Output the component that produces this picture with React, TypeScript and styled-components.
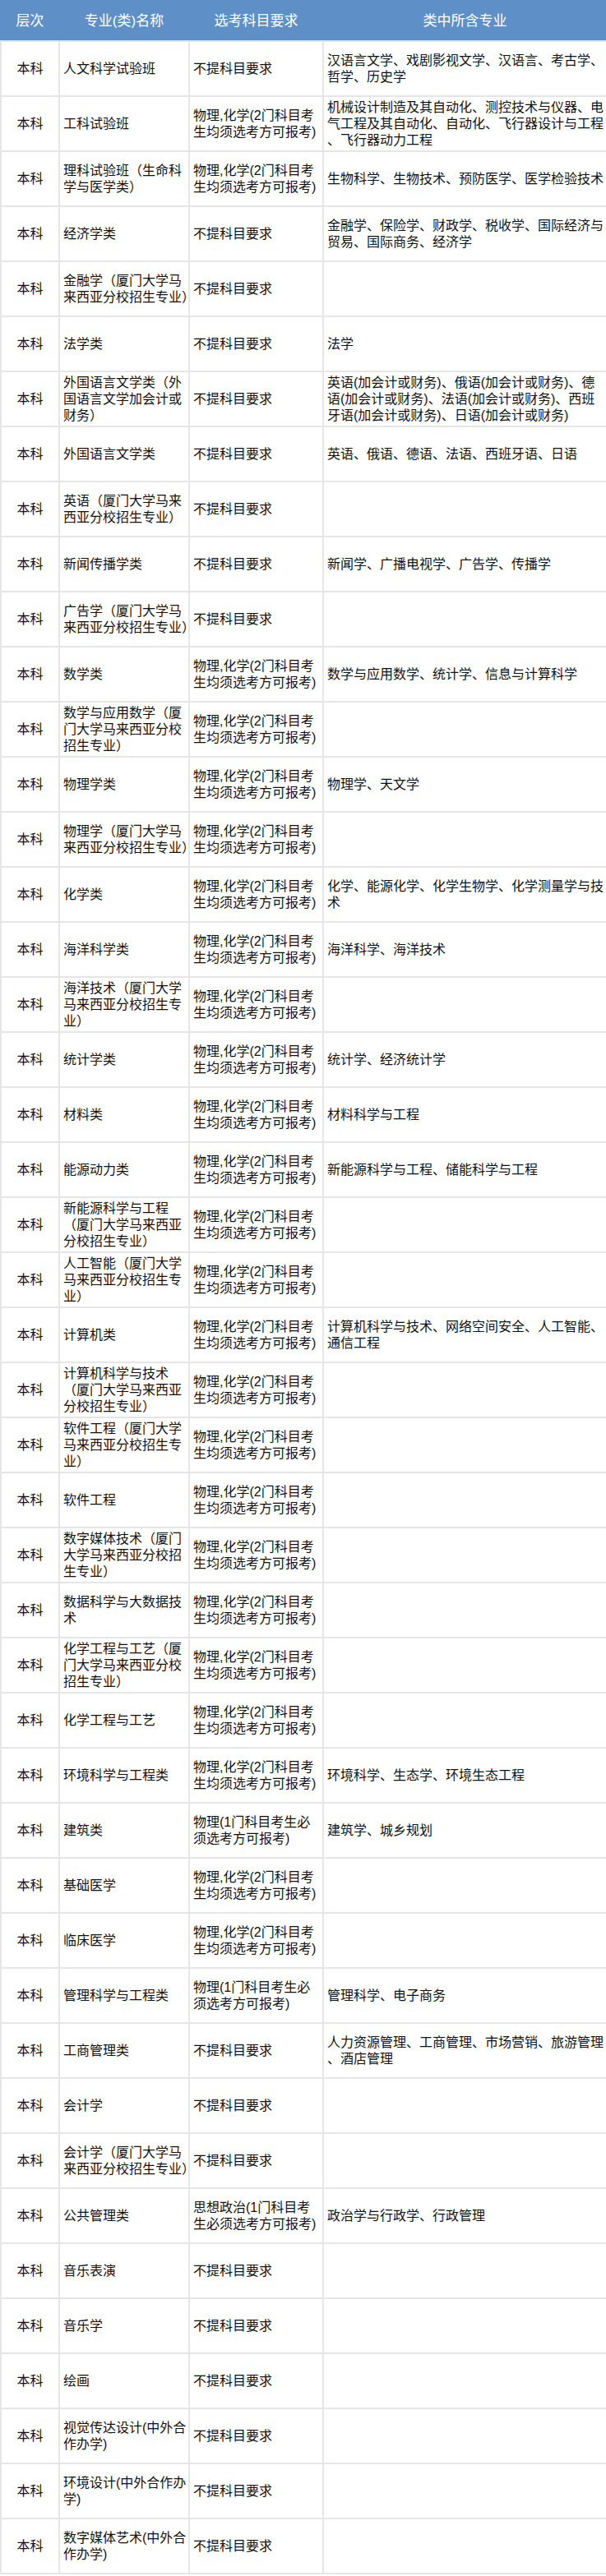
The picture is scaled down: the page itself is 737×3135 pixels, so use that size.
import styled, { createGlobalStyle } from 'styled-components';

const GlobalStyle = createGlobalStyle`
  html, body {
    margin: 0;
    padding: 0;
    background: #ffffff;
  }
  body {
    font-family: "Liberation Sans", "Noto Sans CJK SC", sans-serif;
  }
`;

const NONE = '不提科目要求';
const PHYS_CHEM = '物理,化学(2门科目考生均须选考方可报考)';
const PHYS = '物理(1门科目考生必须选考方可报考)';
const POLI = '思想政治(1门科目考生必须选考方可报考)';
const XMUM = '（厦门大学马来西亚分校招生专业）';

type Row = [string, string, string];

const rows: Row[] = [
  ['人文科学试验班', NONE, '汉语言文学、戏剧影视文学、汉语言、考古学、哲学、历史学'],
  ['工科试验班', PHYS_CHEM, '机械设计制造及其自动化、测控技术与仪器、电气工程及其自动化、自动化、飞行器设计与工程、飞行器动力工程'],
  ['理科试验班（生命科学与医学类）', PHYS_CHEM, '生物科学、生物技术、预防医学、医学检验技术'],
  ['经济学类', NONE, '金融学、保险学、财政学、税收学、国际经济与贸易、国际商务、经济学'],
  ['金融学' + XMUM, NONE, ''],
  ['法学类', NONE, '法学'],
  ['外国语言文学类（外国语言文学加会计或财务）', NONE, '英语(加会计或财务)、俄语(加会计或财务)、德语(加会计或财务)、法语(加会计或财务)、西班牙语(加会计或财务)、日语(加会计或财务)'],
  ['外国语言文学类', NONE, '英语、俄语、德语、法语、西班牙语、日语'],
  ['英语' + XMUM, NONE, ''],
  ['新闻传播学类', NONE, '新闻学、广播电视学、广告学、传播学'],
  ['广告学' + XMUM, NONE, ''],
  ['数学类', PHYS_CHEM, '数学与应用数学、统计学、信息与计算科学'],
  ['数学与应用数学' + XMUM, PHYS_CHEM, ''],
  ['物理学类', PHYS_CHEM, '物理学、天文学'],
  ['物理学' + XMUM, PHYS_CHEM, ''],
  ['化学类', PHYS_CHEM, '化学、能源化学、化学生物学、化学测量学与技术'],
  ['海洋科学类', PHYS_CHEM, '海洋科学、海洋技术'],
  ['海洋技术' + XMUM, PHYS_CHEM, ''],
  ['统计学类', PHYS_CHEM, '统计学、经济统计学'],
  ['材料类', PHYS_CHEM, '材料科学与工程'],
  ['能源动力类', PHYS_CHEM, '新能源科学与工程、储能科学与工程'],
  ['新能源科学与工程' + XMUM, PHYS_CHEM, ''],
  ['人工智能' + XMUM, PHYS_CHEM, ''],
  ['计算机类', PHYS_CHEM, '计算机科学与技术、网络空间安全、人工智能、通信工程'],
  ['计算机科学与技术' + XMUM, PHYS_CHEM, ''],
  ['软件工程' + XMUM, PHYS_CHEM, ''],
  ['软件工程', PHYS_CHEM, ''],
  ['数字媒体技术' + XMUM, PHYS_CHEM, ''],
  ['数据科学与大数据技术', PHYS_CHEM, ''],
  ['化学工程与工艺' + XMUM, PHYS_CHEM, ''],
  ['化学工程与工艺', PHYS_CHEM, ''],
  ['环境科学与工程类', PHYS_CHEM, '环境科学、生态学、环境生态工程'],
  ['建筑类', PHYS, '建筑学、城乡规划'],
  ['基础医学', PHYS_CHEM, ''],
  ['临床医学', PHYS_CHEM, ''],
  ['管理科学与工程类', PHYS, '管理科学、电子商务'],
  ['工商管理类', NONE, '人力资源管理、工商管理、市场营销、旅游管理、酒店管理'],
  ['会计学', NONE, ''],
  ['会计学' + XMUM, NONE, ''],
  ['公共管理类', POLI, '政治学与行政学、行政管理'],
  ['音乐表演', NONE, ''],
  ['音乐学', NONE, ''],
  ['绘画', NONE, ''],
  ['视觉传达设计(中外合作办学)', NONE, ''],
  ['环境设计(中外合作办学)', NONE, ''],
  ['数字媒体艺术(中外合作办学)', NONE, ''],
];

const Table = styled.table`
  width: 737px;
  table-layout: fixed;
  border-collapse: collapse;
  border: 2px solid #dde4ec;
  font-family: "Liberation Sans", "Noto Sans CJK SC", sans-serif;
  color: #111;
`;

const HeadCell = styled.th`
  height: 47px;
  padding: 0;
  background: #5e90c7;
  color: #ffffff;
  font-size: 17px;
  font-weight: normal;
  line-height: 20px;
  text-align: center;
  vertical-align: middle;
  border: 2px solid #5e90c7;
  border-bottom: 2px solid #e6e6e6;
`;

const Cell = styled.td<{ $align?: 'center' | 'left'; $padRight?: number; $loose?: boolean }>`
  height: 63px;
  padding: 1px ${(p) => p.$padRight ?? 0}px 1px ${(p) => (p.$align === 'center' ? 0 : 4)}px;
  font-size: 16px;
  line-height: 20px;
  text-align: ${(p) => p.$align ?? 'left'};
  vertical-align: middle;
  border: 2px solid #e6e6e6;
  background: #ffffff;
  word-break: break-all;
  line-break: ${(p) => (p.$loose ? 'anywhere' : 'auto')};
`;

export default function App() {
  return (
    <>
      <GlobalStyle />
      <Table>
        <colgroup>
          <col style={{ width: 71 }} />
          <col style={{ width: 158 }} />
          <col style={{ width: 163 }} />
          <col style={{ width: 345 }} />
        </colgroup>
        <thead>
          <tr>
            <HeadCell>层次</HeadCell>
            <HeadCell>专业(类)名称</HeadCell>
            <HeadCell>选考科目要求</HeadCell>
            <HeadCell>类中所含专业</HeadCell>
          </tr>
        </thead>
        <tbody>
          {rows.map(([name, req, majors], i) => (
            <tr key={i}>
              <Cell $align="center">本科</Cell>
              <Cell>{name}</Cell>
              <Cell $padRight={2}>{req}</Cell>
              <Cell $loose>{majors}</Cell>
            </tr>
          ))}
        </tbody>
      </Table>
    </>
  );
}
